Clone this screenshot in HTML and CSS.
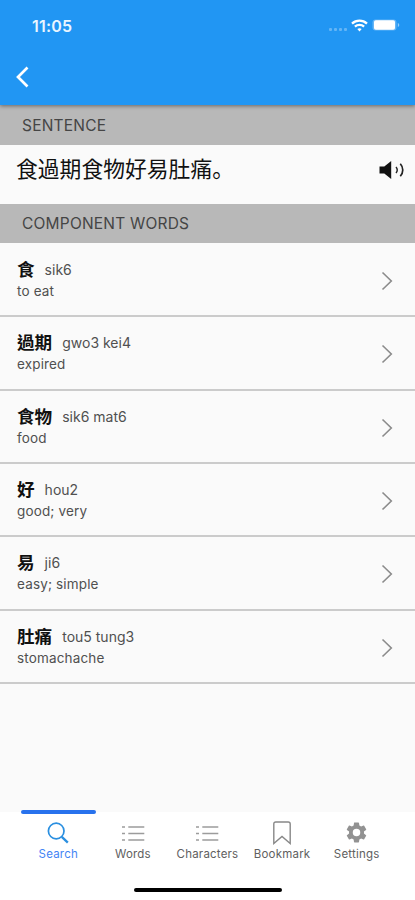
FILE: index.html
```html
<!DOCTYPE html>
<html lang="zh-Hant">
<head>
<meta charset="utf-8">
<title>Sentence</title>
<link rel="stylesheet" href="styles.css">
</head>
<body>
<header class="header">
  <div class="status">
    <span class="time">11:05</span>
    <div class="indicators">
      <span class="signal"><i></i><i></i><i></i><i></i></span>
      <svg class="wifi" width="17" height="13" viewBox="0 0 17 13" fill="none" stroke="#fff" stroke-width="2.3"><path d="M1 4.7C5.2.7 11.8.7 16 4.7M3.9 7.7c2.6-2.4 6.6-2.4 9.2 0"/><path d="M6.3 10.1c1.3-1.1 3.1-1.1 4.4 0L8.5 12.4z" fill="#fff" stroke="none"/></svg>
      <svg class="battery" width="28" height="12" viewBox="0 0 28 12"><rect x=".5" y=".5" width="24" height="11" rx="3" fill="#fff" fill-opacity=".3"/><rect x="2" y="1.3" width="21" height="9.4" rx="1.8" fill="#fff"/><path d="M25.8 4v4c2-.8 2-3.2 0-4z" fill="#fff" fill-opacity=".5"/></svg>
    </div>
  </div>
  <svg class="back" width="14" height="22" viewBox="0 0 14 22" fill="none" stroke="#fff" stroke-width="2.7"><path d="M11.500 1.500 2 11l9.500 9.500"/></svg>
</header>
<main class="content">
  <h2 class="section section-first">SENTENCE</h2>
  <div class="sentence">
    <p class="sentence-text" lang="ja">食過期食物好易肚痛。</p>
    <svg width="26" height="20" viewBox="0 0 26 20" fill="none" stroke="#222"><path d="M.5 6.500h4.800L12.200 1v18l-6.900-5.500H.5z" fill="#111" stroke="none"/><path d="M17 7c1.500 1.800 1.500 4.200 0 6" stroke-width="1.400"/><path d="M21.300 3.800c3.300 3.700 3.300 8.700 0 12.400" stroke-width="1.700"/></svg>
  </div>
  <h2 class="section">COMPONENT WORDS</h2>
  <ul class="words">
    <li class="word"><div><p class="line"><b>食</b><span>sik6</span></p><p class="meaning">to eat</p></div><svg class="chevron" viewBox="0 0 12 20"><path d="m1.500 1.500 8.800 8.500-8.800 8.500"/></svg></li>
    <li class="word"><div><p class="line"><b>過期</b><span>gwo3 kei4</span></p><p class="meaning">expired</p></div><svg class="chevron" viewBox="0 0 12 20"><path d="m1.500 1.500 8.800 8.500-8.800 8.500"/></svg></li>
    <li class="word"><div><p class="line"><b>食物</b><span>sik6 mat6</span></p><p class="meaning">food</p></div><svg class="chevron" viewBox="0 0 12 20"><path d="m1.500 1.500 8.800 8.500-8.800 8.500"/></svg></li>
    <li class="word"><div><p class="line"><b>好</b><span>hou2</span></p><p class="meaning">good; very</p></div><svg class="chevron" viewBox="0 0 12 20"><path d="m1.500 1.500 8.800 8.500-8.800 8.500"/></svg></li>
    <li class="word"><div><p class="line"><b>易</b><span>ji6</span></p><p class="meaning">easy; simple</p></div><svg class="chevron" viewBox="0 0 12 20"><path d="m1.500 1.500 8.800 8.500-8.800 8.500"/></svg></li>
    <li class="word"><div><p class="line"><b>肚痛</b><span>tou5 tung3</span></p><p class="meaning">stomachache</p></div><svg class="chevron" viewBox="0 0 12 20"><path d="m1.500 1.500 8.800 8.500-8.800 8.500"/></svg></li>
  </ul>
</main>
<footer class="footer">
  <nav class="tabs">
    <a class="tab active"><svg width="24" height="24" viewBox="0 0 24 24" fill="none" stroke="#2a8fe0"><circle cx="10.200" cy="10" r="7.800" stroke-width="1.700"/><path d="m15.800 15.800 6 5.800" stroke-width="2.300"/></svg><span>Search</span></a>
    <a class="tab"><svg width="24" height="24" viewBox="0 0 24 24" fill="none" stroke="#9c9c9c" stroke-width="1.700"><path d="M1 6h3M1 12.500h3M1 19h3M7.300 6h16M7.300 12.500h16M7.300 19h16"/></svg><span>Words</span></a>
    <a class="tab"><svg width="24" height="24" viewBox="0 0 24 24" fill="none" stroke="#9c9c9c" stroke-width="1.700"><path d="M1 6h3M1 12.500h3M1 19h3M7.300 6h16M7.300 12.500h16M7.300 19h16"/></svg><span>Characters</span></a>
    <a class="tab"><svg width="24" height="24" viewBox="0 0 24 24" fill="none" stroke="#888" stroke-width="1.400"><path d="M3.800 22.500V3q0-2 2-2h12.400q2 0 2 2v19.500L12 15.500z"/></svg><span>Bookmark</span></a>
    <a class="tab"><svg class="gear" viewBox="0 0 24 24" fill="#929292"><path d="M19.140 12.940c.04-.3.060-.61.060-.94 0-.32-.02-.64-.07-.94l2.030-1.580a.49.49 0 0 0 .12-.61l-1.920-3.320a.488.488 0 0 0-.59-.22l-2.390.96c-.5-.38-1.030-.7-1.620-.94l-.36-2.540a.484.484 0 0 0-.48-.41h-3.840c-.24 0-.43.17-.47.41l-.36 2.540c-.59.24-1.130.57-1.620.94l-2.390-.96c-.22-.08-.47 0-.59.22L2.740 8.870c-.12.21-.08.47.12.61l2.030 1.580c-.05.3-.09.63-.09.94s.02.64.07.94l-2.030 1.580a.49.49 0 0 0-.12.61l1.920 3.320c.12.22.37.29.59.22l2.390-.96c.5.38 1.030.7 1.620.94l.36 2.540c.05.24.24.41.48.41h3.840c.24 0 .44-.17.470-.41l.36-2.540c.59-.24 1.130-.56 1.620-.94l2.390.96c.22.08.47 0 .59-.22l1.920-3.320a.49.49 0 0 0-.12-.61zM12 15.600a3.600 3.600 0 1 1 0-7.200 3.600 3.600 0 0 1 0 7.200z"/></svg><span>Settings</span></a>
  </nav>
  <div class="home"></div>
</footer>
</body>
</html>
```
FILE: styles.css
```css
* { box-sizing: border-box; margin: 0; padding: 0; }
body {
  width: 415px;
  height: 900px;
  display: flex;
  flex-direction: column;
  overflow: hidden;
  background: #fafafa;
  color: #222;
  font-family: Inter, "Noto Sans CJK TC", sans-serif;
}
.header {
  flex: none;
  height: 105px;
  background: #2196f3;
  box-shadow: 0 1px 4px rgba(0, 0, 0, .45);
  z-index: 1;
}
.status {
  display: flex;
  justify-content: space-between;
  height: 66px;
  padding: 16px 16px 0 32px;
}
.time { color: #eaf5ff; font-size: 16px; font-weight: 600; line-height: 20px; letter-spacing: .2px; }
.indicators { display: flex; height: 20px; align-items: center; margin-top: -1px; }
.signal { display: flex; gap: 2px; margin: 9px 4px 0 0; }
.signal i { width: 3px; height: 3px; border-radius: 1px; background: rgba(255, 255, 255, .3); }
.wifi { margin-right: 4px; }
.battery { margin-right: -1px; }
.back { display: block; margin-left: 16px; }
.content { flex: 1; }
.section {
  height: 39px;
  padding-left: 22px;
  background: #b8b8b8;
  color: #454545;
  font-size: 15.500px;
  font-weight: 400;
  line-height: 39px;
  letter-spacing: .2px;
}
.section-first { height: 40px; line-height: 41px; }
.sentence {
  display: flex;
  justify-content: space-between;
  height: 59px;
  padding: 15px 10px 0 16px;
}
.sentence-text { margin-top: -2px; color: #111; font-family: "Noto Sans CJK JP", sans-serif; font-size: 21.800px; line-height: 20px; }
.words { list-style: none; padding-top: 1px; }
.word {
  display: flex;
  justify-content: space-between;
  height: 73.350px;
  padding: 14px 22px 0 17px;
  border-bottom: 2px solid #cbcbcb;
}
.line { display: flex; height: 23px; align-items: center; gap: 10px; }
.line b { color: #111; font-size: 17.600px; font-weight: 700; line-height: 23px; }
.line span { font-size: 14px; color: #505050; line-height: 23px; letter-spacing: 0; }
.meaning { font-size: 13.500px; line-height: 20px; color: #505050; letter-spacing: .15px; }
.chevron { width: 12px; height: 20px; margin-top: 13px; fill: none; stroke: #8b8b8b; stroke-width: 1.600; }
.footer { flex: none; height: 90px; background: linear-gradient(#fafafa 1.5px, #fff 1.5px); }
.tabs { display: flex; height: 77px; padding: 0 21px; }
.tab {
  flex: 1;
  display: flex;
  flex-direction: column;
  align-items: center;
  color: #606060;
  font-size: 11.500px;
  letter-spacing: .2px;
}
.tab::before { content: ""; flex: none; align-self: stretch; height: 4px; border-radius: 2px; }
.tab svg { flex: none; width: 24px; height: 24px; margin-top: 7px; }
.tab .gear { width: 25px; height: 25px; margin: 6px 0 0; }
.tab span { line-height: 16px; margin-top: 1px; }
.tab.active { color: #4384f5; }
.tab.active::before { background: #2872ed; }
.home { width: 148px; height: 4px; margin: 1px auto 0; border-radius: 2px; background: #000; }
```
